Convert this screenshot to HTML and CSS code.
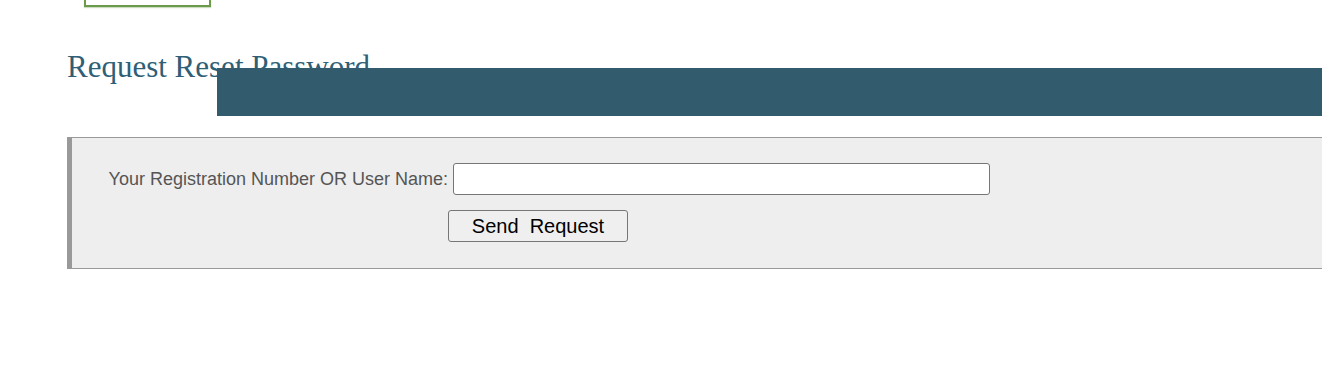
FILE: index.html
```html
<!DOCTYPE html>
<html>
<head>
<meta charset="utf-8">
<link rel="stylesheet" href="styles.css">
</head>
<body>
<div class="page">
  <div class="logo"></div>
  <h1 class="title">Request Reset Password</h1>
  <div class="banner"></div>
  <form class="panel">
    <div class="row">
      <label class="label" for="user">Your Registration Number OR User Name:</label>
      <input class="field" id="user" type="text">
    </div>
    <div class="row">
      <span class="label"></span>
      <button class="btn" type="button">Send&nbsp; Request</button>
    </div>
  </form>
</div>
</body>
</html>
```
FILE: styles.css
```css
html, body {
  margin: 0;
  padding: 0;
  background: #ffffff;
  overflow: hidden;
}
.page {
  position: relative;
  width: 1322px;
  height: 377px;
  overflow: hidden;
}
.logo {
  margin-left: 84px;
  width: 123px;
  height: 5px;
  border: 2px solid #6b9a4b;
  border-top: none;
  box-shadow: 0 1px 1px rgba(107,154,75,0.35);
}
.title {
  margin: 43px 0 0 67px;
  font-family: "Liberation Serif", "Times New Roman", serif;
  font-weight: normal;
  font-size: 31px;
  line-height: 34px;
  color: #2e5f76;
}
.banner {
  position: absolute;
  left: 217px;
  right: 0;
  top: 68px;
  height: 48px;
  background: #325c6e;
}
.panel {
  margin: 53px 0 0 67px;
  width: 1300px;
  height: 132px;
  box-sizing: border-box;
  background: #eeeeee;
  border-left: 5px solid #999999;
  border-top: 1px solid #999999;
  border-bottom: 1px solid #999999;
  padding-top: 25px;
  font-family: "Liberation Sans", Arial, sans-serif;
}
.row {
  display: flex;
  align-items: center;
}
.row + .row {
  margin-top: 15px;
}
.label {
  width: 376px;
  flex: none;
  text-align: right;
  font-size: 18px;
  color: #555555;
}
.field {
  margin-left: 5px;
  width: 537px;
  height: 32px;
  box-sizing: border-box;
  border: 1px solid #767676;
  border-radius: 3px;
  background: #ffffff;
  padding: 0 4px;
}
.btn {
  width: 180px;
  height: 32px;
  box-sizing: border-box;
  border: 1px solid #767676;
  border-radius: 3px;
  background: #efefef;
  font-family: "Liberation Sans", Arial, sans-serif;
  font-size: 20px;
  color: #000000;
  padding: 0;
}
```
